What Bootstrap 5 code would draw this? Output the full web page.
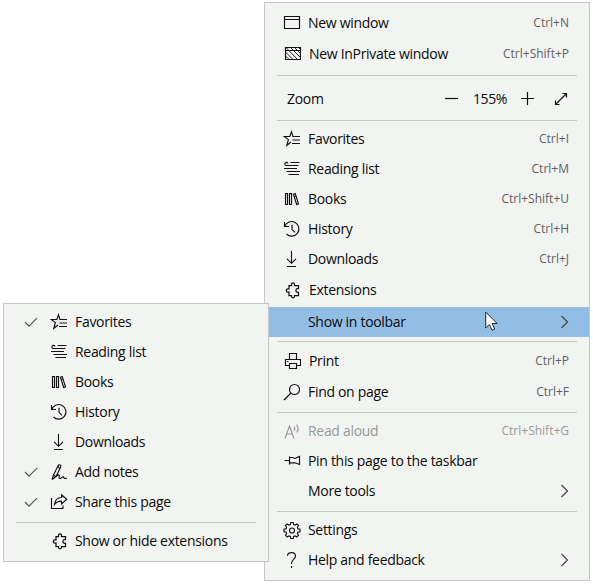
<!DOCTYPE html>
<html lang="en">
<head>
<meta charset="utf-8">
<meta name="viewport" content="width=device-width, initial-scale=1">
<title>Browser menu</title>
<link href="https://cdn.jsdelivr.net/npm/bootstrap@5.3.0/dist/css/bootstrap.min.css" rel="stylesheet">
<style>
body{font-family:"Open Sans","Noto Sans",sans-serif;font-size:14px;color:#0a0a0a;background:#fff;width:593px;height:584px;overflow:hidden}
.menu-panel{background:#f2f4f2;border:1px solid #c6c8c6}
.main-menu{width:326px;height:579px;margin:2px 0 0 264px;padding-top:5px}
.sub-menu{left:3px;top:303px;width:266px;height:259px;padding-top:3px}
.item{height:30px;line-height:30px;padding-left:18px;padding-right:20px;white-space:nowrap}
.sub-menu .item{padding-left:20px}
.ico{width:18px;height:18px;flex:none;margin-right:7px;fill:none;stroke:#111;stroke-width:1.15}
.tick{width:16px;height:16px;flex:none;margin-right:10px;fill:none;stroke:#555;stroke-width:1.2}
.lbl{letter-spacing:-.31px}
.keys{font-size:12px;color:#606060}
.sep{height:1px;background:#c6c8c6;margin:5px 12px 3px}
.sep-a{margin-top:6px;margin-bottom:8px}
.sep-b{margin-top:6px;margin-bottom:3px}
.sep-c{margin-top:4px;margin-bottom:4px}
.sep-end{margin-top:5px;margin-bottom:3px}
.drop1{margin-top:1px}
.nudge{padding-left:1px}
.chosen{background:#92bee6;margin-top:2px;padding-bottom:1px}
.dim,.dim .keys{color:#999}
.dim .ico{stroke:#999}
.chev{width:10px;height:16px;margin-right:-1px;fill:none;stroke:#444;stroke-width:1.2}
.pointer{left:485px;top:311px;width:13px;height:21px}
.zoom-row{padding-left:22px;padding-right:21px}
.tool{fill:none;stroke:#111;stroke-width:1.2;width:14px;height:14px}
.pct{width:62px;text-align:center;letter-spacing:-.4px}
.grow{margin-left:19px}
</style>
<script src="https://cdn.jsdelivr.net/npm/bootstrap@5.3.0/dist/js/bootstrap.bundle.min.js"></script>
</head>
<body class="position-relative">
<svg class="d-none">
<symbol id="window" viewBox="0 0 18 18"><path d="M1.500 2.500h15v12h-15zM1.500 5.500h15"/></symbol>
<symbol id="private" viewBox="0 0 18 18"><path d="M2.500 2.500h15v12h-15zM2.500 5.500h15"/><path stroke-width=".9" d="M2.500 11l3.500 3.500M2.500 7l7.500 7.500M3.500 3l11 11.500M7.500 2.500l10 10M11.500 2.500l6 6M15.500 2.500l2 2"/></symbol>
<symbol id="star" viewBox="0 0 18 18"><path d="M8 12L3.800 15.400 5.400 9.600 1.400 6.500H6.800L8.500 1.700 9.900 6.500H17M9.500 10H17M9 13.500H17"/></symbol>
<symbol id="list" viewBox="0 0 18 18"><path d="M4.500 5.500H3A1.600 1.600 0 1 1 5 3.500M7.500 2.500H16.500M4.500 5.500H15.500M1 8.500H14M3.500 11.500H17M5.500 14.500H16"/></symbol>
<symbol id="books" viewBox="0 0 18 18"><path d="M2.500 3.500h2v11h-2zM6.500 3.500h2v11h-2zM10.400 4.200l1.800-.6 3.300 10.300-1.800.6zM11.300 6.500l1.800-.6"/></symbol>
<symbol id="history" viewBox="0 0 18 18"><path d="M1.500 2v4.500h4.500M1.800 6.300A7.300 7.300 0 1 1 3.500 14M9 4.700v4.600l3 3"/></symbol>
<symbol id="down" viewBox="0 0 18 18"><path d="M8.500 1v12M4 8.800l4.500 4.500L13 8.800M4 16.500h9"/></symbol>
<symbol id="puzzle" viewBox="0 0 18 18"><path stroke-width="1.25" d="M6 4.500H8.500V3.300A1.500 1.500 0 0 1 11.500 3.300V4.500H15.500V7.700H14.700A1.500 1.500 0 0 0 14.700 11.300H15.500V14.500H11.500V15.300A1.500 1.500 0 0 1 8.500 15.300V14.500H6V11.200H5A1.700 1.700 0 0 1 5 7.800H6z"/></symbol>
<symbol id="printer" viewBox="0 0 18 18"><path d="M5.500 13.500h-3v-6h15v6h-3M6.500 7.500v-6h7v6M6.500 11.500h7v5h-7zM4 9.500h1.500M5.500 13.500h1M13.500 13.500h1"/></symbol>
<symbol id="search" viewBox="0 0 18 18"><circle cx="11.500" cy="6.500" r="5"/><path d="M8 10l-7 7"/></symbol>
<symbol id="aloud" viewBox="0 0 18 18"><path d="M2 16.500L6.500 4 11 16.500M3.700 12h5.700M11 4.500q1.500 2 0 4.200M13.700 2.500q2.900 4.200 0 8"/></symbol>
<symbol id="pin" viewBox="0 0 18 18"><path d="M1.500 8.500H6M6.500 4.500v8M6.500 5.500H9.500L12 6.500 16.500 4.500v8L12 10.800H6.500M12 6.500"/></symbol>
<symbol id="gear" viewBox="0 0 18 18"><path d="M7.800 1.500h2.400l.4 2 1.500.6 1.700-1.100 1.700 1.700-1.100 1.700.6 1.500 2 .4v2.400l-2 .4-.6 1.500 1.100 1.700-1.700 1.700-1.700-1.100-1.500.6-.4 2H7.800l-.4-2-1.500-.6L4.200 16l-1.700-1.700 1.100-1.700L3 11.100l-2-.4V8.300l2-.4.6-1.500-1.100-1.700L4.200 3l1.700 1.100 1.500-.6z"/><circle cx="9" cy="9.500" r="2.500"/></symbol>
<symbol id="help" viewBox="0 0 18 18"><path d="M4.500 4.800C4.800 .5 12.500 .5 12.500 5.200C12.500 8.400 8.500 8.500 8.500 12.500V13M8.500 15v2"/></symbol>
<symbol id="pen" viewBox="0 0 18 18"><path d="M2 16.500L3.400 12.200 7.800 3.300Q9.200 1 10.500 2.200 11.500 3 10 5.500L6 13.500 2 16.500M3.400 12.200L6 13.500M8 3.200L9.800 6M6 13.500Q9 10.800 9.300 12.500C9.500 14 8.300 15 9.600 15.500 11.500 15.800 12 13.500 13.500 14 14 15.500 15.500 16 16.800 15"/></symbol>
<symbol id="share" viewBox="0 0 18 18"><path d="M1.500 5v10.500h11.500V12.500M11.500 1.700L16.800 6.300 11.500 11V8.200C7.500 8 6 9.500 4.500 11.500 5 7 7.500 4.500 11.500 4.500z"/></symbol>
<symbol id="check" viewBox="0 0 16 16"><path d="M1 8L5 12.200 13 4.200"/></symbol>
<symbol id="chevron" viewBox="0 0 10 16"><path d="M1.500 2L7.500 8 1.500 14"/></symbol>
</svg>

<main class="menu-panel main-menu">
<div class="item d-flex align-items-center"><svg class="ico"><use href="#window"/></svg><span class="lbl">New window</span><span class="keys ms-auto">Ctrl+N</span></div>
<div class="item d-flex align-items-center drop1"><svg class="ico"><use href="#private"/></svg><span class="lbl nudge">New InPrivate window</span><span class="keys ms-auto">Ctrl+Shift+P</span></div>
<div class="sep sep-a"></div>
<div class="item d-flex align-items-center zoom-row"><span class="lbl me-auto">Zoom</span><svg class="tool"><path d="M0 6.500h13"/></svg><span class="pct">155%</span><svg class="tool"><path d="M0 6.500h13M6.500 0v13"/></svg><svg class="tool grow"><path d="M1.500 12.500l11-11M8.500 1.500h4V5.500M1.500 8.500v4H5.500"/></svg></div>
<div class="sep sep-b"></div>
<div class="item d-flex align-items-center"><svg class="ico"><use href="#star"/></svg><span class="lbl">Favorites</span><span class="keys ms-auto">Ctrl+I</span></div>
<div class="item d-flex align-items-center"><svg class="ico"><use href="#list"/></svg><span class="lbl">Reading list</span><span class="keys ms-auto">Ctrl+M</span></div>
<div class="item d-flex align-items-center"><svg class="ico"><use href="#books"/></svg><span class="lbl">Books</span><span class="keys ms-auto">Ctrl+Shift+U</span></div>
<div class="item d-flex align-items-center"><svg class="ico"><use href="#history"/></svg><span class="lbl">History</span><span class="keys ms-auto">Ctrl+H</span></div>
<div class="item d-flex align-items-center"><svg class="ico"><use href="#down"/></svg><span class="lbl">Downloads</span><span class="keys ms-auto">Ctrl+J</span></div>
<div class="item d-flex align-items-center drop1"><svg class="ico"><use href="#puzzle"/></svg><span class="lbl nudge">Extensions</span></div>
<div class="item d-flex align-items-center chosen"><svg class="ico"></svg><span class="lbl">Show in toolbar</span><svg class="chev ms-auto"><use href="#chevron"/></svg></div>
<div class="sep sep-c"></div>
<div class="item d-flex align-items-center"><svg class="ico"><use href="#printer"/></svg><span class="lbl nudge">Print</span><span class="keys ms-auto">Ctrl+P</span></div>
<div class="item d-flex align-items-center drop1"><svg class="ico"><use href="#search"/></svg><span class="lbl">Find on page</span><span class="keys ms-auto">Ctrl+F</span></div>
<div class="sep"></div>
<div class="item d-flex align-items-center dim"><svg class="ico"><use href="#aloud"/></svg><span class="lbl">Read aloud</span><span class="keys ms-auto">Ctrl+Shift+G</span></div>
<div class="item d-flex align-items-center"><svg class="ico"><use href="#pin"/></svg><span class="lbl">Pin this page to the taskbar</span></div>
<div class="item d-flex align-items-center"><svg class="ico"></svg><span class="lbl">More tools</span><svg class="chev ms-auto"><use href="#chevron"/></svg></div>
<div class="sep sep-end"></div>
<div class="item d-flex align-items-center"><svg class="ico"><use href="#gear"/></svg><span class="lbl">Settings</span></div>
<div class="item d-flex align-items-center"><svg class="ico"><use href="#help"/></svg><span class="lbl">Help and feedback</span><svg class="chev ms-auto"><use href="#chevron"/></svg></div>
</main>

<section class="menu-panel sub-menu position-absolute">
<div class="item d-flex align-items-center"><svg class="tick"><use href="#check"/></svg><svg class="ico"><use href="#star"/></svg><span class="lbl">Favorites</span></div>
<div class="item d-flex align-items-center"><svg class="tick"></svg><svg class="ico"><use href="#list"/></svg><span class="lbl">Reading list</span></div>
<div class="item d-flex align-items-center"><svg class="tick"></svg><svg class="ico"><use href="#books"/></svg><span class="lbl">Books</span></div>
<div class="item d-flex align-items-center"><svg class="tick"></svg><svg class="ico"><use href="#history"/></svg><span class="lbl">History</span></div>
<div class="item d-flex align-items-center"><svg class="tick"></svg><svg class="ico"><use href="#down"/></svg><span class="lbl">Downloads</span></div>
<div class="item d-flex align-items-center"><svg class="tick"><use href="#check"/></svg><svg class="ico"><use href="#pen"/></svg><span class="lbl">Add notes</span></div>
<div class="item d-flex align-items-center"><svg class="tick"><use href="#check"/></svg><svg class="ico"><use href="#share"/></svg><span class="lbl">Share this page</span></div>
<div class="sep"></div>
<div class="item d-flex align-items-center"><svg class="tick"></svg><svg class="ico"><use href="#puzzle"/></svg><span class="lbl">Show or hide extensions</span></div>
</section>
<svg class="pointer position-absolute" viewBox="0 0 13 21"><path d="M.7 1v16l3.700-3.500 2.700 5.800 2.600-1.200-2.600-5.600h5z" fill="#fff" stroke="#222"/></svg>
</body>
</html>
